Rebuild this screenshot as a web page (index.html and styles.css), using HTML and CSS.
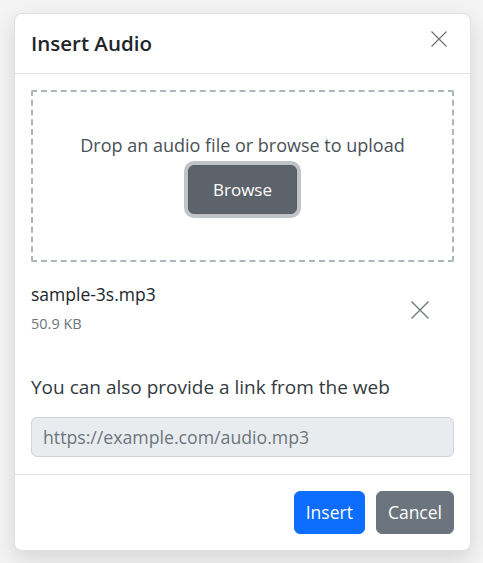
FILE: index.html
```html
<!DOCTYPE html>
<html lang="en">
<head>
<meta charset="utf-8">
<title>Insert Audio</title>
<link rel="stylesheet" href="styles.css">
</head>
<body>
<div class="modal">
  <div class="modal-header">
    <h5 class="modal-title">Insert Audio</h5>
    <button class="btn-close" aria-label="Close">
      <svg viewBox="0 0 16 16" width="16" height="16"><path d="M0.5 0.5L15.5 15.5M15.5 0.5L0.5 15.5" stroke="currentColor" stroke-width="1.2" fill="none"/></svg>
    </button>
  </div>
  <div class="modal-body">
    <div class="dropzone">
      <p class="drop-text">Drop an audio file or browse to upload</p>
      <button class="btn btn-browse">Browse</button>
    </div>
    <div class="file-row">
      <div class="file-info">
        <div class="file-name">sample-3s.mp3</div>
        <div class="file-size">50.9 KB</div>
      </div>
      <button class="file-remove" aria-label="Remove">
        <svg viewBox="0 0 18 18" width="18" height="18"><path d="M0.5 0.5L17.5 17.5M17.5 0.5L0.5 17.5" stroke="currentColor" stroke-width="1.3" fill="none"/></svg>
      </button>
    </div>
    <p class="link-label">You can also provide a link from the web</p>
    <input class="form-control" type="text" placeholder="https://example.com/audio.mp3" disabled>
  </div>
  <div class="modal-footer">
    <button class="btn btn-primary">Insert</button>
    <button class="btn btn-secondary">Cancel</button>
  </div>
</div>
</body>
</html>
```

FILE: styles.css
```css
* { box-sizing: border-box; }

html, body {
  margin: 0;
  height: 100%;
}

body {
  background: #f4f4f4;
  font-family: "Open Sans", "Noto Sans", sans-serif;
  font-size: 18px;
  line-height: 27px;
  color: #212529;
  padding: 13px 12px 0 14px;
}

.modal {
  width: 457px;
  background: #fff;
  border: 1px solid rgba(0, 0, 0, 0.12);
  border-radius: 8px;
  box-shadow: 0 8px 22px rgba(0, 0, 0, 0.13);
}

.modal-header {
  display: flex;
  align-items: center;
  justify-content: space-between;
  padding: 16px 23px 16px 16px;
  border-bottom: 1px solid #dee2e6;
}

.modal-title {
  margin: 0;
  font-size: 20.5px;
  font-weight: 540;
  line-height: 27px;
  color: #212529;
}

.btn-close {
  border: 0;
  background: none;
  padding: 0;
  width: 16px;
  height: 16px;
  color: #6f7377;
  display: flex;
  margin-top: -10px;
}

.modal-body {
  padding: 16px 16px 17px 16px;
}

.dropzone {
  border: 2px dashed #adb5bd;
  border-radius: 2px;
  padding: 40px 16px 46px;
  display: flex;
  flex-direction: column;
  align-items: center;
}

.drop-text {
  margin: 0 0 6px;
  color: #495057;
}

.btn {
  font-family: inherit;
  line-height: 27px;
  border: 1px solid transparent;
  border-radius: 6px;
  color: #fff;
  cursor: pointer;
}

.btn-browse {
  font-size: 17px;
  height: 49px;
  background: #5c636a;
  border-color: #565e64;
  padding: 0 24px;
  box-shadow: 0 0 0 4px rgba(130, 138, 145, 0.5);
}

.file-row {
  display: flex;
  align-items: center;
  justify-content: space-between;
  margin-top: 19px;
  padding-right: 25px;
}

.file-name {
  font-size: 17.5px;
  color: #212529;
}

.file-size {
  margin-top: 4px;
  font-size: 14.5px;
  line-height: 24px;
  color: #6c757d;
}

.file-remove {
  border: 0;
  background: none;
  padding: 0;
  width: 18px;
  height: 18px;
  color: #6c757d;
  display: flex;
  margin-top: 2px;
}

.link-label {
  margin: 38px 0 16px;
  font-size: 19px;
  color: #343a40;
}

.form-control {
  display: block;
  width: 100%;
  height: 40px;
  padding: 6px 11px;
  font-family: inherit;
  font-size: 17.7px;
  color: #6c757d;
  background: #e9ecef;
  border: 1px solid #ced4da;
  border-radius: 6px;
}

.form-control::placeholder {
  color: #6c757d;
  opacity: 1;
}

.modal-footer {
  display: flex;
  justify-content: flex-end;
  gap: 11px;
  padding: 16px;
  border-top: 1px solid #dee2e6;
}

.btn-primary,
.btn-secondary {
  font-size: 17.5px;
  height: 43px;
  padding: 0 11px;
}

.btn-primary {
  background: #0d6efd;
  border-color: #0d6efd;
}

.btn-secondary {
  background: #6c757d;
  border-color: #6c757d;
}
```
